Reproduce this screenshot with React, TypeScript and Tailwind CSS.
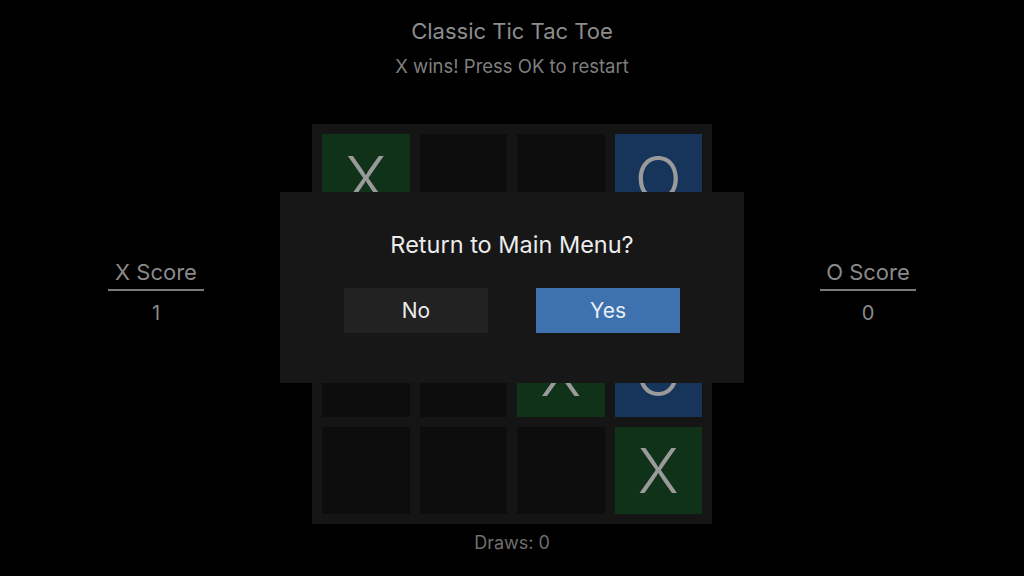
import React from "react";

type Mark = "X" | "O" | "";

const board: Mark[] = [
  "X", "", "", "O",
  "", "X", "", "O",
  "", "", "X", "O",
  "", "", "", "X",
];

function Cell({ m }: { m: Mark }) {
  const bg = m === "X" ? "bg-[#0f3219]" : m === "O" ? "bg-[#17345a]" : "bg-[#0d0d0d]";
  return (
    <div className={`${bg} flex items-center justify-center pt-[2px] text-[62px] font-light leading-none text-[#9a9a9a]`}>
      {m}
    </div>
  );
}

function Score({ label, value }: { label: string; value: number }) {
  return (
    <div className="flex flex-col items-center">
      <div className="w-[96px] border-b-2 border-[#7a7a7a] pb-[3px] text-center text-[22px] leading-[28px] text-[#8a8a8a]">
        {label}
      </div>
      <div className="mt-[8px] text-[20px] leading-[28px] text-[#8a8a8a]">{value}</div>
    </div>
  );
}

export default function App() {
  return (
    <div
      className="relative h-[576px] w-[1024px] overflow-hidden bg-black"
      style={{ fontFamily: 'Inter, "Noto Sans", sans-serif' }}
    >
      <div className="flex flex-col items-center">
        <div className="mt-[15px] text-[22px] leading-[32px] text-[#8d8d8d]">Classic Tic Tac Toe</div>
        <div className="mt-[3px] text-[18.5px] leading-[32px] text-[#7f7f7f]">X wins! Press OK to restart</div>
        <div className="mt-[42px] grid w-full grid-cols-[1fr_400px_1fr] items-start">
          <div className="flex justify-center pt-[134px]">
            <Score label="X Score" value={1} />
          </div>
          <div className="grid h-[400px] w-[400px] grid-cols-4 grid-rows-4 gap-[10px] bg-[#151515] p-[10px]">
            {board.map((m, i) => (
              <Cell key={i} m={m} />
            ))}
          </div>
          <div className="flex justify-center pt-[134px]">
            <Score label="O Score" value={0} />
          </div>
        </div>
        <div className="mt-[5px] text-[18px] leading-[28px] text-[#6f6f6f]">Draws: 0</div>
      </div>

      <div className="absolute left-[280px] top-[192px] flex h-[191px] w-[464px] flex-col items-center bg-[#171717]">
        <div className="mt-[37px] text-[23.5px] leading-[32px] text-[#ececec]">Return to Main Menu?</div>
        <div className="mt-[27px] flex gap-[48px]">
          <div className="flex h-[45px] w-[144px] items-center justify-center bg-[#222222] text-[21px] text-[#ececec]">
            No
          </div>
          <div className="flex h-[45px] w-[144px] items-center justify-center bg-[#3e72af] text-[21px] text-[#e8eef6]">
            Yes
          </div>
        </div>
      </div>
    </div>
  );
}
